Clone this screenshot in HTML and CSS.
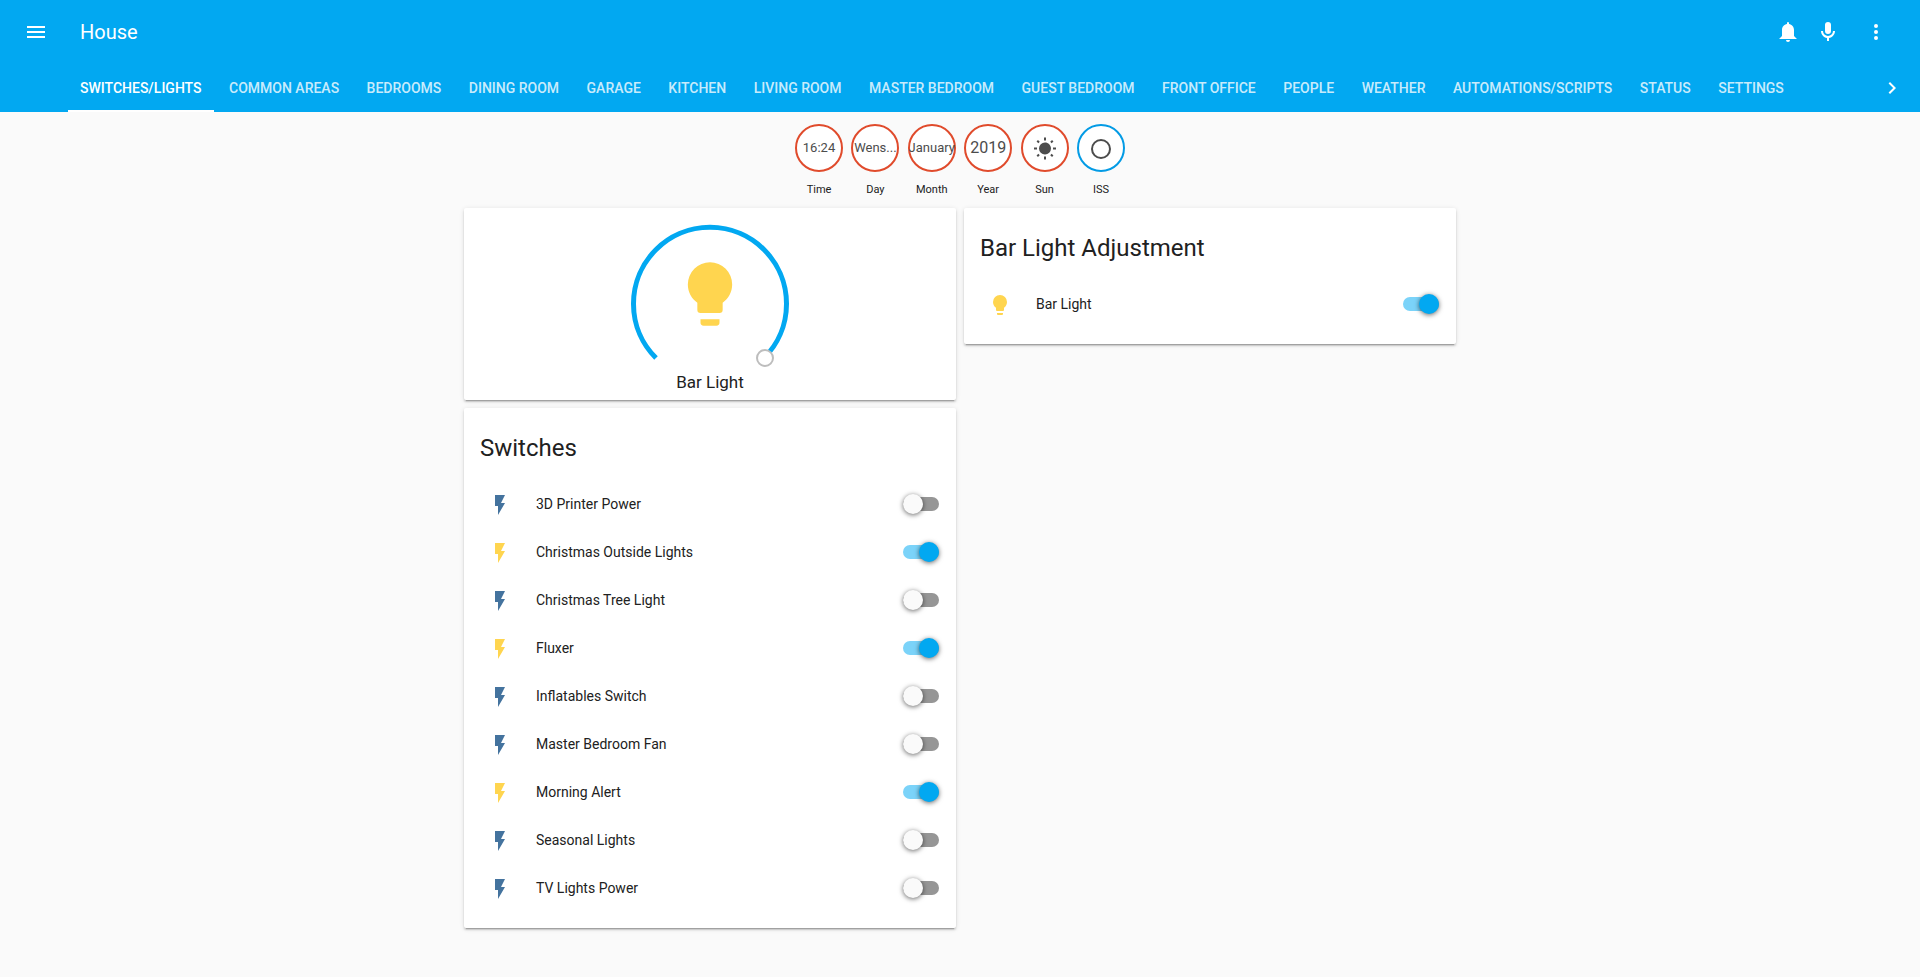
FILE: index.html
```html
<!DOCTYPE html>
<html lang="en">
<head>
<meta charset="utf-8">
<title>House</title>
<link rel="stylesheet" href="styles.css">
</head>
<body>
<svg class="sprite" aria-hidden="true">
  <symbol id="flash" viewBox="0 0 24 24"><path d="M7,2V13H10V22L17,10H13L17,2H7Z"/></symbol>
  <symbol id="bulb" viewBox="0 0 24 24"><path d="M12,2A7,7 0 0,0 5,9C5,11.38 6.19,13.47 8,14.74V17A1,1 0 0,0 9,18H15A1,1 0 0,0 16,17V14.74C17.81,13.47 19,11.38 19,9A7,7 0 0,0 12,2M9,21A1,1 0 0,0 10,22H14A1,1 0 0,0 15,21V20H9V21Z"/></symbol>
</svg>
<header class="header">
  <div class="toolbar">
    <button class="icon-button" aria-label="Menu"><svg class="icon" viewBox="0 0 24 24"><path d="M3,6H21V8H3V6M3,11H21V13H3V11M3,16H21V18H3V16Z"/></svg></button>
    <h1 class="title">House</h1>
    <button class="icon-button" aria-label="Notifications"><svg class="icon" viewBox="0 0 24 24"><path d="M14,20A2,2 0 0,1 12,22A2,2 0 0,1 10,20H14M12,2A1,1 0 0,1 13,3V4.08C15.84,4.56 18,7.03 18,10V16L21,19H3L6,16V10C6,7.03 8.16,4.56 11,4.08V3A1,1 0 0,1 12,2Z"/></svg></button>
    <button class="icon-button" aria-label="Voice"><svg class="icon" viewBox="0 0 24 24"><path d="M12,2A3,3 0 0,1 15,5V11A3,3 0 0,1 12,14A3,3 0 0,1 9,11V5A3,3 0 0,1 12,2M19,11C19,14.53 16.39,17.44 13,17.93V21H11V17.93C7.61,17.44 5,14.53 5,11H7A5,5 0 0,0 12,16A5,5 0 0,0 17,11H19Z"/></svg></button>
    <button class="icon-button overflow" aria-label="More"><svg class="icon" viewBox="0 0 24 24"><path d="M12,16A2,2 0 0,1 14,18A2,2 0 0,1 12,20A2,2 0 0,1 10,18A2,2 0 0,1 12,16M12,10A2,2 0 0,1 14,12A2,2 0 0,1 12,14A2,2 0 0,1 10,12A2,2 0 0,1 12,10M12,4A2,2 0 0,1 14,6A2,2 0 0,1 12,8A2,2 0 0,1 10,6A2,2 0 0,1 12,4Z"/></svg></button>
  </div>
  <div class="tab-bar">
    <nav class="tabs">
      <a class="tab selected" href="#" aria-current="page">SWITCHES/LIGHTS</a>
      <a class="tab" href="#">COMMON AREAS</a>
      <a class="tab" href="#">BEDROOMS</a>
      <a class="tab" href="#">DINING ROOM</a>
      <a class="tab" href="#">GARAGE</a>
      <a class="tab" href="#">KITCHEN</a>
      <a class="tab" href="#">LIVING ROOM</a>
      <a class="tab" href="#">MASTER BEDROOM</a>
      <a class="tab" href="#">GUEST BEDROOM</a>
      <a class="tab" href="#">FRONT OFFICE</a>
      <a class="tab" href="#">PEOPLE</a>
      <a class="tab" href="#">WEATHER</a>
      <a class="tab" href="#">AUTOMATIONS/SCRIPTS</a>
      <a class="tab" href="#">STATUS</a>
      <a class="tab" href="#">SETTINGS</a>
    </nav>
    <button class="icon-button" aria-label="Scroll tabs right"><svg class="icon" viewBox="0 0 24 24"><path d="M8.59,16.58L13.17,12L8.59,7.41L10,6L16,12L10,18L8.59,16.58Z"/></svg></button>
  </div>
</header>
<main class="view">
  <div class="badges">
    <div class="badge"><div class="disc">16:24</div><span class="caption">Time</span></div>
    <div class="badge"><div class="disc">Wens...</div><span class="caption">Day</span></div>
    <div class="badge"><div class="disc">January</div><span class="caption">Month</span></div>
    <div class="badge"><div class="disc large">2019</div><span class="caption">Year</span></div>
    <div class="badge"><div class="disc glyph"><svg class="icon" viewBox="0 0 24 24"><path d="M3.55,18.54L4.96,19.95L6.76,18.16L5.34,16.74M11,22.45H13V19.5H11M12,5.5A6,6 0 0,0 6,11.5A6,6 0 0,0 12,17.5A6,6 0 0,0 18,11.5C18,8.18 15.31,5.5 12,5.5M20,12.5H23V10.5H20M17.24,18.16L19.04,19.95L20.45,18.54L18.66,16.74M20.45,4.46L19.04,3.05L17.24,4.84L18.66,6.26M13,0.55H11V3.5H13M4,10.5H1V12.5H4M6.76,4.84L4.96,3.05L3.55,4.46L5.34,6.26L6.76,4.84Z"/></svg></div><span class="caption">Sun</span></div>
    <div class="badge"><div class="disc glyph blue"><svg class="icon" viewBox="0 0 24 24"><path d="M12,20A8,8 0 0,1 4,12A8,8 0 0,1 12,4A8,8 0 0,1 20,12A8,8 0 0,1 12,20M12,2A10,10 0 0,0 2,12A10,10 0 0,0 12,22A10,10 0 0,0 22,12A10,10 0 0,0 12,2Z"/></svg></div><span class="caption">ISS</span></div>
  </div>
  <div class="columns">
    <div class="column">
      <section class="card dimmer">
        <svg class="dial" viewBox="0 0 176 152" role="img" aria-label="Brightness 100%">
          <path class="arc" d="M34,142A76.5,76.5 0 1 1 142,142"/>
          <use class="lit" href="#bulb" x="50" y="40" width="76" height="76"/>
          <circle class="handle" cx="143" cy="142" r="8"/>
        </svg>
        <div class="dimmer-name">Bar Light</div>
      </section>
      <section class="card">
        <h2 class="card-title">Switches</h2>
        <label class="row"><svg class="state"><use href="#flash"/></svg><span class="name">3D Printer Power</span><input class="toggle" type="checkbox"></label>
        <label class="row"><svg class="state lit"><use href="#flash"/></svg><span class="name">Christmas Outside Lights</span><input class="toggle" type="checkbox" checked></label>
        <label class="row"><svg class="state"><use href="#flash"/></svg><span class="name">Christmas Tree Light</span><input class="toggle" type="checkbox"></label>
        <label class="row"><svg class="state lit"><use href="#flash"/></svg><span class="name">Fluxer</span><input class="toggle" type="checkbox" checked></label>
        <label class="row"><svg class="state"><use href="#flash"/></svg><span class="name">Inflatables Switch</span><input class="toggle" type="checkbox"></label>
        <label class="row"><svg class="state"><use href="#flash"/></svg><span class="name">Master Bedroom Fan</span><input class="toggle" type="checkbox"></label>
        <label class="row"><svg class="state lit"><use href="#flash"/></svg><span class="name">Morning Alert</span><input class="toggle" type="checkbox" checked></label>
        <label class="row"><svg class="state"><use href="#flash"/></svg><span class="name">Seasonal Lights</span><input class="toggle" type="checkbox"></label>
        <label class="row"><svg class="state"><use href="#flash"/></svg><span class="name">TV Lights Power</span><input class="toggle" type="checkbox"></label>
      </section>
    </div>
    <div class="column">
      <section class="card">
        <h2 class="card-title">Bar Light Adjustment</h2>
        <label class="row"><svg class="state lit"><use href="#bulb"/></svg><span class="name">Bar Light</span><input class="toggle" type="checkbox" checked></label>
      </section>
    </div>
  </div>
</main>
</body>
</html>
```
FILE: styles.css
```css
* { box-sizing: border-box; }

body {
  margin: 0;
  background: #fafafa;
  color: #212121;
  font: 14px/20px Roboto, "Liberation Sans", sans-serif;
}

.sprite { display: none; }

.icon {
  display: block;
  width: 24px;
  height: 24px;
  fill: currentColor;
}

.header {
  background: #02a8f1;
  color: #fff;
}

.toolbar {
  display: flex;
  align-items: center;
  height: 64px;
  padding: 0 24px 0 16px;
}

.icon-button {
  flex: none;
  width: 40px;
  height: 40px;
  padding: 8px;
  border: 0;
  background: none;
  color: inherit;
}

.overflow { margin-left: 8px; }

.title {
  flex: 1;
  margin: 0 0 0 24px;
  font-size: 20px;
  font-weight: 400;
}

.tab-bar {
  display: flex;
  align-items: center;
  height: 48px;
  padding: 0 8px 0 68px;
}

.tabs {
  flex: 1;
  height: 48px;
  min-width: 0;
  overflow: hidden;
  white-space: nowrap;
}

.tab {
  display: inline-block;
  height: 48px;
  padding: 0 12px;
  border-bottom: 2px solid transparent;
  color: rgba(255, 255, 255, 0.8);
  font-weight: 500;
  line-height: 48px;
  text-decoration: none;
}

.tab.selected {
  border-color: #fff;
  color: #fff;
}

.view { padding: 12px 4px 16px; }

.badges {
  display: flex;
  justify-content: space-between;
  width: 330px;
  margin: 0 auto;
}

.badge {
  display: flex;
  flex-direction: column;
  align-items: center;
  gap: 8px;
  width: 48px;
}

.disc {
  display: flex;
  align-items: center;
  justify-content: center;
  width: 48px;
  height: 48px;
  border: 2px solid #e04b2c;
  border-radius: 50%;
  background: #fff;
  color: #4c4c4c;
  font-size: 13px;
}

.disc.large { font-size: 16px; }
.disc.glyph { padding-top: 2px; }
.disc.blue { border-color: #039be5; }

.caption { font-size: 11px; }

.columns {
  display: flex;
  justify-content: center;
  align-items: flex-start;
  gap: 8px;
  margin-top: 8px;
}

.column {
  display: flex;
  flex: 1;
  flex-direction: column;
  gap: 8px;
  max-width: 492px;
}

.card {
  padding: 16px;
  border-radius: 2px;
  background: #fff;
  box-shadow: 0 2px 2px rgba(0, 0, 0, 0.14), 0 1px 5px rgba(0, 0, 0, 0.12), 0 3px 1px -2px rgba(0, 0, 0, 0.2);
}

.card-title {
  margin: 0;
  padding: 4px 0 12px;
  font-size: 24px;
  font-weight: 400;
  line-height: 40px;
}

.row {
  display: flex;
  align-items: center;
  height: 48px;
}

.state {
  width: 24px;
  height: 24px;
  margin: 2px 8px 0;
  fill: #44739e;
}

.lit { fill: #ffd54f; }

.name {
  flex: 1;
  margin-left: 16px;
}

.toggle {
  appearance: none;
  display: flex;
  align-items: center;
  width: 36px;
  height: 14px;
  margin: 0 1px 0 0;
  border-radius: 7px;
  background: #969696;
}

.toggle::before {
  content: "";
  width: 20px;
  height: 20px;
  border-radius: 50%;
  background: #fafafa;
  box-shadow: 0 1px 5px rgba(0, 0, 0, 0.6);
}

.toggle:checked {
  justify-content: flex-end;
  background: #7bd3f9;
}

.toggle:checked::before { background: #02a8f1; }

.dimmer {
  display: flex;
  flex-direction: column;
  align-items: center;
  padding: 8px 16px 4px;
}

.dial {
  width: 176px;
  height: 152px;
}

.arc {
  fill: none;
  stroke: #02a8f1;
  stroke-width: 5;
}

.handle {
  fill: #fff;
  stroke: #bdbdbd;
  stroke-width: 2;
}

.dimmer-name {
  font-size: 17px;
  line-height: 28px;
}
```
